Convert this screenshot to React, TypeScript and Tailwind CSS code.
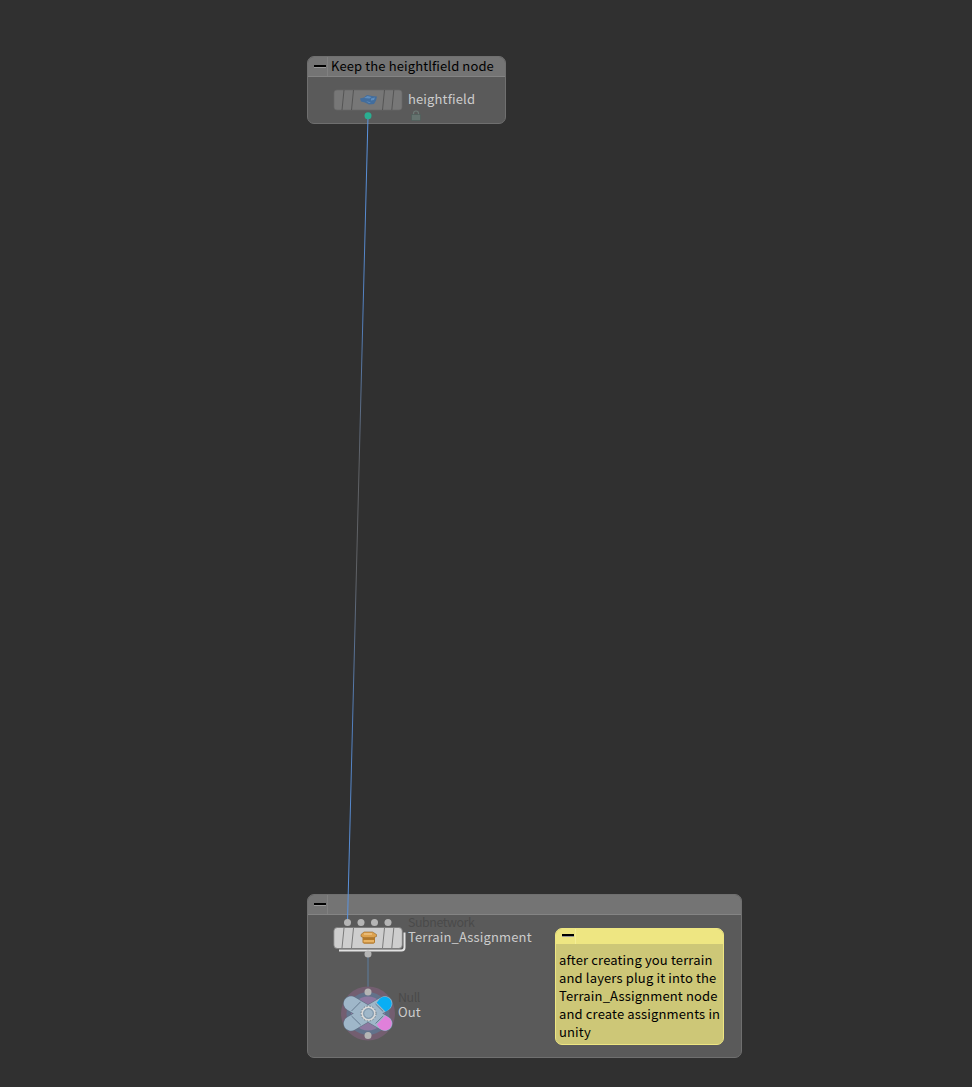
import React from "react";

const font = "font-['Noto_Sans_CJK_SC',sans-serif] whitespace-pre";

function Minus({ className = "" }: { className?: string }) {
  return (
    <div className={`flex w-[20px] shrink-0 justify-center self-stretch border-r ${className}`}>
      <div className="ml-[5px] h-[2px] w-[12px] bg-black shadow-[0_1px_0_#9a9a9a]" />
    </div>
  );
}

function NetworkBox({ title, className }: { title?: string; className: string }) {
  return (
    <div className={`absolute overflow-hidden rounded-[7px] border border-[#6f6f6f] bg-[#5a5a5a] ${className}`}>
      <div className="flex h-[20px] items-start border-b border-[#848484] bg-[#747474]">
        <Minus className="border-[#808080] pt-[8px]" />
        {title && <span className={`ml-[3px] text-[13px] leading-[18px] tracking-[0.12px] text-black ${font}`}>{title}</span>}
      </div>
    </div>
  );
}

function NodeLabel({ type, name, className }: { type?: string; name: string; className: string }) {
  return (
    <div className={`absolute flex flex-col text-[13px] leading-[15px] tracking-[0.14px] ${font} ${className}`}>
      {type && <span className="-mb-px text-[12.4px] tracking-[-0.42px] text-[#4a4a4a]">{type}</span>}
      <span className="text-[#cccccc]">{name}</span>
    </div>
  );
}

function Dot({ x, y, fill = "#b5b5b5" }: { x: number; y: number; fill?: string }) {
  return <circle cx={x} cy={y} r="3.5" fill={fill} />;
}

function Slats({ y, stroke }: { y: number; stroke: string }) {
  return (
    <g stroke={stroke} strokeWidth=".9">
      {[342.5, 352, 383, 392.3].map((x) => (
        <path key={x} d={`M${x + 1.5} ${y}L${x - 0.5} ${y + 20}`} />
      ))}
    </g>
  );
}

function Diagram() {
  return (
    <svg className="absolute inset-0" width="972" height="1087" viewBox="0 0 972 1087" fill="none">
      <defs>
        <linearGradient id="wire" gradientUnits="userSpaceOnUse" x1="0" y1="116" x2="0" y2="922">
          <stop offset="0" stopColor="#5b94e0" />
          <stop offset=".25" stopColor="#527fbd" />
          <stop offset=".43" stopColor="#5f6165" />
          <stop offset=".57" stopColor="#5f6165" />
          <stop offset=".75" stopColor="#527fbd" />
          <stop offset="1" stopColor="#5b94e0" />
        </linearGradient>
      </defs>
      <path d="M368 116L347.5 922" stroke="url(#wire)" />
      <path d="M368 954V992" stroke="#5d7d9d" />

      <rect x="334" y="90" width="68" height="20" rx="3" fill="#777777" stroke="#696969" strokeWidth=".7" />
      <Slats y={90} stroke="#505050" />
      <path d="M360 98.500l4-1 3-2.500 5 1 5 .5-1 4-2 3.500-5 .5-4-2-4-1z" fill="#426d9d" />
      <path d="M364 98l3.500-2 4 1-2 1.500zM371 98.500l4-1-1 2.500-3 .5zM366 101l5 1.500-2 .5z" fill="#5f8dbd" />
      <Dot x={368} y={115.8} fill="#2aae91" />
      <path d="M413.500 115v-1.500q0-2.500 2.500-2.500t2.500 2.500v1.500" stroke="#6d7a76" strokeWidth="1.200" />
      <path d="M411.500 114.500h9v6h-9z" fill="#65736f" stroke="#4f5e5a" strokeWidth=".7" />

      <path d="M339 950.500h62.500q3 0 3-3v-15" stroke="#e1e1e1" strokeWidth="2" />
      <rect x="333.800" y="927.500" width="68.500" height="21" rx="3.500" fill="#cecece" stroke="#777" strokeWidth=".8" />
      <Slats y={928} stroke="#707070" />
      {[347.5, 361, 374.5, 388].map((x) => <Dot key={x} x={x} y={922.5} />)}
      <Dot x={368} y={954} />
      <path d="M362.500 935h12.500v7.500l-1.500 1.200h-9.500l-1.500-1.200z" fill="#b47a2c" />
      <path d="M361 934.500l3-2.500h8.500l4 2.500v2l-3 1.200h-9.500l-3-1.200z" fill="#dda24e" stroke="#946528" strokeWidth=".6" />
      <path d="M364 934h8" stroke="#f1cc93" strokeWidth="1.200" />
      <path d="M363.500 941.200h10.500" stroke="#e8b466" strokeWidth="2.400" />

      <circle cx="368" cy="1013.500" r="27" fill="#735e70" />
      <circle cx="368" cy="1013.500" r="21.500" fill="#62728b" />
      <circle cx="368" cy="1013.500" r="17" fill="#8d78a0" />
      <path d="M351 1003.500L385 1023.500M351 1023.500L385 1003.500" stroke="#5f7184" strokeWidth="15.500" strokeLinecap="round" />
      <path d="M351 1003.500L385 1023.500M351 1023.500L385 1003.500" stroke="#9fb7c9" strokeWidth="14.500" strokeLinecap="round" />
      <path d="M-5-6.300L0-7a7 7 0 0 1 0 14L-5 6.300z" transform="translate(384.700 1003.700) rotate(-45)" fill="#08aef4" />
      <path d="M-5-6.300L0-7a7 7 0 0 1 0 14L-5 6.300z" transform="translate(384.700 1023.500) rotate(45)" fill="#e080da" />
      <path d="M351.500 1011l9.200-9.300M351.500 1016l9.200 9M375.500 1004l7.700 7.500M375.500 1023.500l7.700-7.500" stroke="#667b90" />
      <circle cx="368.500" cy="1013.500" r="6.500" fill="#9fb7c9" stroke="#d9d9d9" strokeWidth="2" />
      <circle cx="368.500" cy="1013.500" r="7.500" stroke="#5c6974" strokeWidth=".8" strokeDasharray="1.5 1.5" />
      <circle cx="368.500" cy="1013.500" r="4.800" stroke="#70879a" strokeWidth=".8" />
      <Dot x={368} y={992} />
      <Dot x={368} y={1035.5} />
    </svg>
  );
}

export default function App() {
  return (
    <main className="relative h-[1087px] w-[972px] overflow-hidden bg-[#303030]">
      <NetworkBox title="Keep the heightlfield node" className="left-[307px] top-[56px] h-[68px] w-[198.5px]" />
      <NetworkBox className="left-[307px] top-[894px] h-[164px] w-[434.5px]" />
      <Diagram />
      <NodeLabel name="heightfield" className="left-[408px] top-[91px]" />
      <NodeLabel type="Subnetwork" name="Terrain_Assignment" className="left-[408px] top-[915px]" />
      <NodeLabel type="Null" name="Out" className="left-[398px] top-[990px]" />
      <section className="absolute left-[555px] top-[928px] h-[117px] w-[169px] overflow-hidden rounded-[7px] border border-[#eee682] bg-[#cdc777]">
        <div className="flex h-[15px] bg-[#eee682]">
          <Minus className="border-[#f4ee96] pt-[5px]" />
        </div>
        <p className={`px-[3px] pt-[7px] text-[13px] leading-[18px] tracking-[0.15px] text-black ${font}`}>
          {"after creating you terrain\nand layers plug it into the\nTerrain_Assignment node\nand create assignments in\nunity"}
        </p>
      </section>
    </main>
  );
}
